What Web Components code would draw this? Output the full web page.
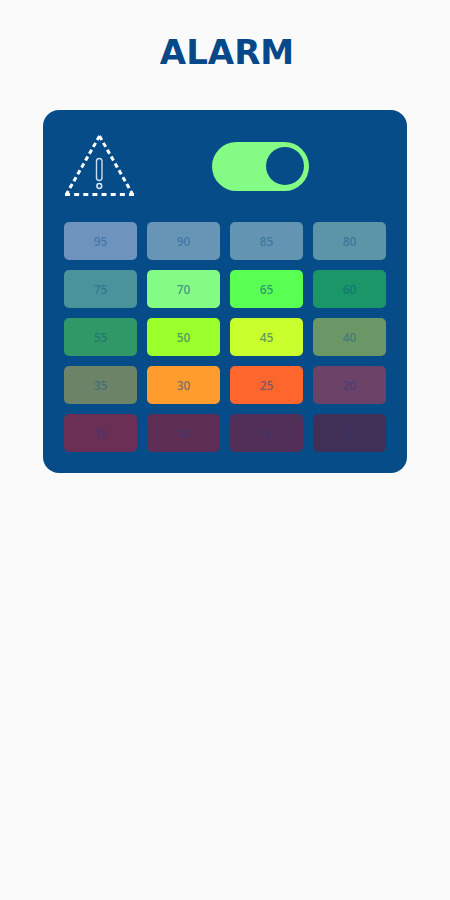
<!DOCTYPE html>
<html lang="en">
  <head>
    <meta charset="utf-8">
    <meta name="viewport" content="width=device-width, initial-scale=1">
    <title>Alarm</title>
<style>
  body {
    margin: 0;
    background: #fafafa;
    font-family: "DejaVu Sans", Verdana, sans-serif;
  }
</style>
  </head>
  <body>
    <alarm-page>
      <span slot="title">ALARM</span>
      <alarm-panel>
        <warning-icon slot="icon"></warning-icon>
        <toggle-switch slot="switch" label="Alarm on"></toggle-switch>
        <level-button color="#6e93bd">95</level-button>
        <level-button color="#6795b6">90</level-button>
        <level-button color="#6395b2">85</level-button>
        <level-button color="#5c94a8">80</level-button>
        <level-button color="#4b939b">75</level-button>
        <level-button color="#84fb84" active>70</level-button>
        <level-button color="#5aff54" active>65</level-button>
        <level-button color="#1b9668">60</level-button>
        <level-button color="#2f9866">55</level-button>
        <level-button color="#9bff2b" active>50</level-button>
        <level-button color="#c8ff2c" active>45</level-button>
        <level-button color="#6b9767">40</level-button>
        <level-button color="#6c8368">35</level-button>
        <level-button color="#ff9c2e" active>30</level-button>
        <level-button color="#ff662e" active>25</level-button>
        <level-button color="#6c4268" dim>20</level-button>
        <level-button color="#6b2e54" dim>15</level-button>
        <level-button color="#5f2e54" dim>10</level-button>
        <level-button color="#522f58" dim>5</level-button>
        <level-button color="#402f56" dim>0</level-button>
      </alarm-panel>
    </alarm-page>

    <template id="page_template">
      <style>
        :host {
          display: block;
          padding: 32px 43px;
          --panel: #064c89;
        }
        h1 {
          margin: 0 0 38px;
          padding-left: 4px;
          font-size: 34px;
          line-height: 40px;
          text-align: center;
          color: #064889;
        }
      </style>
      <h1><slot name="title"></slot></h1>
      <slot></slot>
    </template>

    <template id="panel_template">
      <style>
        :host {
          display: block;
          padding: 24px 21px 21px;
          border-radius: 16px;
          background: var(--panel);
        }
        .top {
          display: grid;
          grid-template-columns: 70px 1fr;
          align-items: center;
          height: 64px;
          margin-bottom: 24px;
        }
        .switch {
          justify-self: center;
        }
        .levels {
          display: grid;
          grid-template-columns: repeat(4, 1fr);
          gap: 10px;
        }
      </style>
      <div class="top">
        <slot name="icon"></slot>
        <div class="switch"><slot name="switch"></slot></div>
      </div>
      <div class="levels"><slot></slot></div>
    </template>

    <template id="warning_template">
      <style>
        :host {
          display: block;
          height: 64px;
        }
        svg {
          display: block;
        }
      </style>
      <svg width="70" height="64" viewBox="0 0 70 64" fill="none" stroke="#fff" aria-hidden="true">
        <g stroke-width="3">
          <path d="M1 60.500 H70" stroke-dasharray="5 4.140"/>
          <path d="M35.500 2 L2 61" stroke-dasharray="4.600 3.300"/>
          <path d="M35.500 2 L69 61" stroke-dasharray="4.600 3.300"/>
        </g>
        <rect x="32.500" y="24.500" width="5.500" height="22" rx="2.750" stroke="#c9dcf2" stroke-width="1.400"/>
        <circle cx="35.300" cy="52" r="2.400" stroke="#dceafa" stroke-width="1.500"/>
      </svg>
    </template>

    <template id="switch_template">
      <style>
        :host {
          display: block;
        }
        input {
          appearance: none;
          display: flex;
          align-items: center;
          box-sizing: border-box;
          width: 97px;
          height: 49px;
          margin: 0;
          padding: 0 5px;
          border-radius: 25px;
          background: #6c93bd;
          cursor: pointer;
        }
        input::before {
          content: "";
          width: 38px;
          height: 38px;
          border-radius: 50%;
          background: var(--panel);
        }
        input:checked {
          justify-content: flex-end;
          background: #84fb84;
        }
      </style>
      <input type="checkbox" role="switch" checked>
    </template>

    <template id="level_template">
      <style>
        :host {
          display: block;
        }
        button {
          display: block;
          width: 100%;
          height: 38px;
          padding: 0;
          border: 0;
          border-radius: 5px;
          font-family: "Open Sans", "Noto Sans", sans-serif;
          font-size: 12px;
          font-weight: 600;
          color: rgba(6, 76, 137, 0.4);
          cursor: pointer;
        }
        :host([active]) button {
          color: rgba(6, 76, 137, 0.55);
        }
        :host([dim]) button {
          color: rgba(40, 60, 125, 0.5);
        }
      </style>
      <button type="button"><slot></slot></button>
    </template>

<script>
  function attach(element, id) {
    let copy = document.getElementById(id).content.cloneNode(true)
    let root = element.attachShadow({mode: 'open'})
    root.appendChild(copy)
    return root
  }

  class AlarmPage extends HTMLElement {
    constructor() {
      super()
      attach(this, 'page_template')
    }
  }

  class AlarmPanel extends HTMLElement {
    constructor() {
      super()
      attach(this, 'panel_template')
    }
  }

  class WarningIcon extends HTMLElement {
    constructor() {
      super()
      attach(this, 'warning_template')
    }
  }

  class ToggleSwitch extends HTMLElement {
    constructor() {
      super()
      let input = attach(this, 'switch_template').querySelector('input')
      input.setAttribute('aria-label', this.getAttribute('label'))
    }
  }

  class LevelButton extends HTMLElement {
    constructor() {
      super()
      let button = attach(this, 'level_template').querySelector('button')
      button.style.background = this.getAttribute('color')
      button.addEventListener('click', () => this.toggleAttribute('active'))
    }
  }

  customElements.define('alarm-page', AlarmPage)
  customElements.define('alarm-panel', AlarmPanel)
  customElements.define('warning-icon', WarningIcon)
  customElements.define('toggle-switch', ToggleSwitch)
  customElements.define('level-button', LevelButton)
</script>
  </body>
</html>
